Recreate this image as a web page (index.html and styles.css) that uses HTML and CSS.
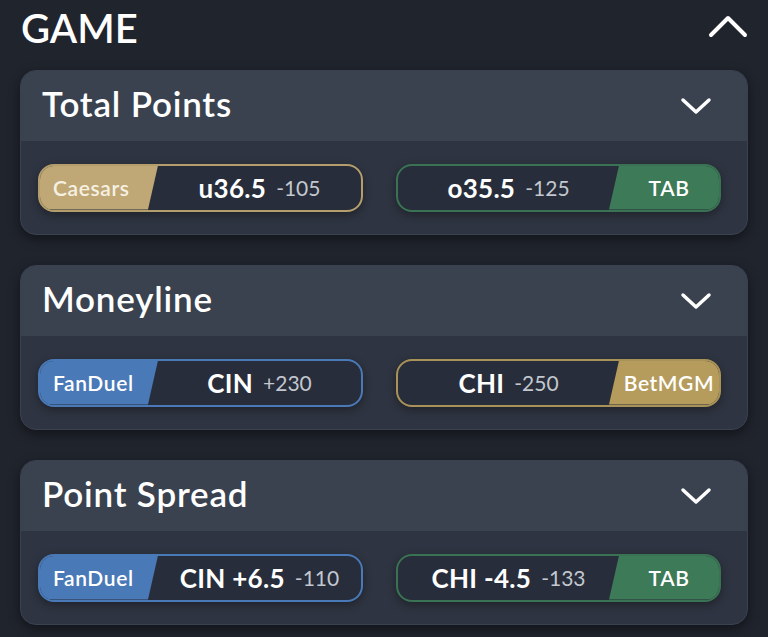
FILE: index.html
```html
<!DOCTYPE html>
<html>
<head>
  <title>Game Odds</title>
  <link rel="stylesheet" href="styles.css">
</head>
<body>
  <div class="page">
    <div class="section-head">
      <h1>GAME</h1>
      <svg class="caret-up" width="40" height="24" viewBox="0 0 40 24">
        <path d="M3 21 L20 4 L37 21" fill="none" stroke="#fff" stroke-width="4" stroke-linecap="round" stroke-linejoin="round"/>
      </svg>
    </div>

    <div class="market">
      <div class="market-head">
        <h2>Total Points</h2>
        <svg class="chevron" width="32" height="18" viewBox="0 0 32 18">
          <path d="M3 3 L16 15 L29 3" fill="none" stroke="#fff" stroke-width="3.5" stroke-linecap="round" stroke-linejoin="round"/>
        </svg>
      </div>
      <div class="market-body">
        <div class="bet caesars">
          <span class="book">Caesars</span>
          <span class="line"><b>u36.5</b> <span class="odds">-105</span></span>
        </div>
        <div class="bet tab right">
          <span class="line"><b>o35.5</b> <span class="odds">-125</span></span>
          <span class="book">TAB</span>
        </div>
      </div>
    </div>

    <div class="market">
      <div class="market-head">
        <h2>Moneyline</h2>
        <svg class="chevron" width="32" height="18" viewBox="0 0 32 18">
          <path d="M3 3 L16 15 L29 3" fill="none" stroke="#fff" stroke-width="3.5" stroke-linecap="round" stroke-linejoin="round"/>
        </svg>
      </div>
      <div class="market-body">
        <div class="bet fanduel">
          <span class="book">FanDuel</span>
          <span class="line"><b>CIN</b> <span class="odds">+230</span></span>
        </div>
        <div class="bet betmgm right">
          <span class="line"><b>CHI</b> <span class="odds">-250</span></span>
          <span class="book">BetMGM</span>
        </div>
      </div>
    </div>

    <div class="market">
      <div class="market-head">
        <h2>Point Spread</h2>
        <svg class="chevron" width="32" height="18" viewBox="0 0 32 18">
          <path d="M3 3 L16 15 L29 3" fill="none" stroke="#fff" stroke-width="3.5" stroke-linecap="round" stroke-linejoin="round"/>
        </svg>
      </div>
      <div class="market-body">
        <div class="bet fanduel">
          <span class="book">FanDuel</span>
          <span class="line"><b>CIN +6.5</b> <span class="odds">-110</span></span>
        </div>
        <div class="bet tab right">
          <span class="line"><b>CHI -4.5</b> <span class="odds">-133</span></span>
          <span class="book">TAB</span>
        </div>
      </div>
    </div>
  </div>
</body>
</html>
```

FILE: styles.css
```css
body {
  margin: 0;
  background: #20242d;
  color: #fff;
  font-family: Lato, "Open Sans", sans-serif;
}

.page {
  padding: 0 20px 0 20px;
}

.section-head {
  height: 56px;
  display: flex;
  align-items: center;
  justify-content: space-between;
  margin-bottom: 14px;
  padding-left: 1px;
}

.section-head h1 {
  margin: 0;
  font-size: 40px;
  font-weight: 600;
}

.caret-up {
  margin-top: -4px;
}

.market {
  border-radius: 16px;
  overflow: hidden;
  border: 1px solid #3b424f;
  background: #2e3441;
  box-shadow: 0 4px 12px rgba(0, 0, 0, 0.45);
  margin-bottom: 30px;
}

.market-head {
  height: 70px;
  background: #3a4250;
  display: flex;
  align-items: center;
  justify-content: space-between;
  padding: 0 35px 6px 21px;
  box-sizing: border-box;
}

.market-head h2 {
  margin: 0;
  font-size: 35px;
  font-weight: 600;
  letter-spacing: 0.8px;
}

.chevron {
  margin-top: 6px;
}

.market-body {
  height: 93px;
  display: flex;
  align-items: center;
  gap: 33px;
  padding: 0 26px 0 17px;
}

.bet {
  flex: 1;
  height: 48px;
  box-sizing: border-box;
  border: 2px solid;
  border-radius: 16px;
  overflow: hidden;
  display: flex;
  background: #272d3a;
  box-shadow: 0 3px 8px rgba(0, 0, 0, 0.35);
}

.book {
  width: 118px;
  display: flex;
  align-items: center;
  padding-left: 13px;
  box-sizing: border-box;
  font-size: 21px;
  font-weight: 600;
  letter-spacing: 0.6px;
  clip-path: polygon(0 0, 100% 0, calc(100% - 10px) 100%, 0 100%);
}

.right .book {
  width: 110px;
  padding-left: 10px;
  justify-content: center;
  clip-path: polygon(10px 0, 100% 0, 100% 100%, 0 100%);
}

.line {
  flex: 1;
  display: flex;
  align-items: center;
  justify-content: center;
  gap: 10px;
  font-size: 21px;
}

.line b {
  font-size: 26px;
  font-weight: 700;
  letter-spacing: 0.3px;
}

.odds {
  color: #c3c7cf;
}

.right .line {
  padding-left: 10px;
}

.caesars { border-color: #b49e6c; }
.caesars .book { background: #bfa876; color: #f6f0e2; }

.fanduel { border-color: #4a79b8; }
.fanduel .book { background: #4a79b8; }

.tab { border-color: #3a7354; }
.tab .book { background: #3d7a57; }

.betmgm { border-color: #a89258; }
.betmgm .book { background: #b59c5c; }
```
